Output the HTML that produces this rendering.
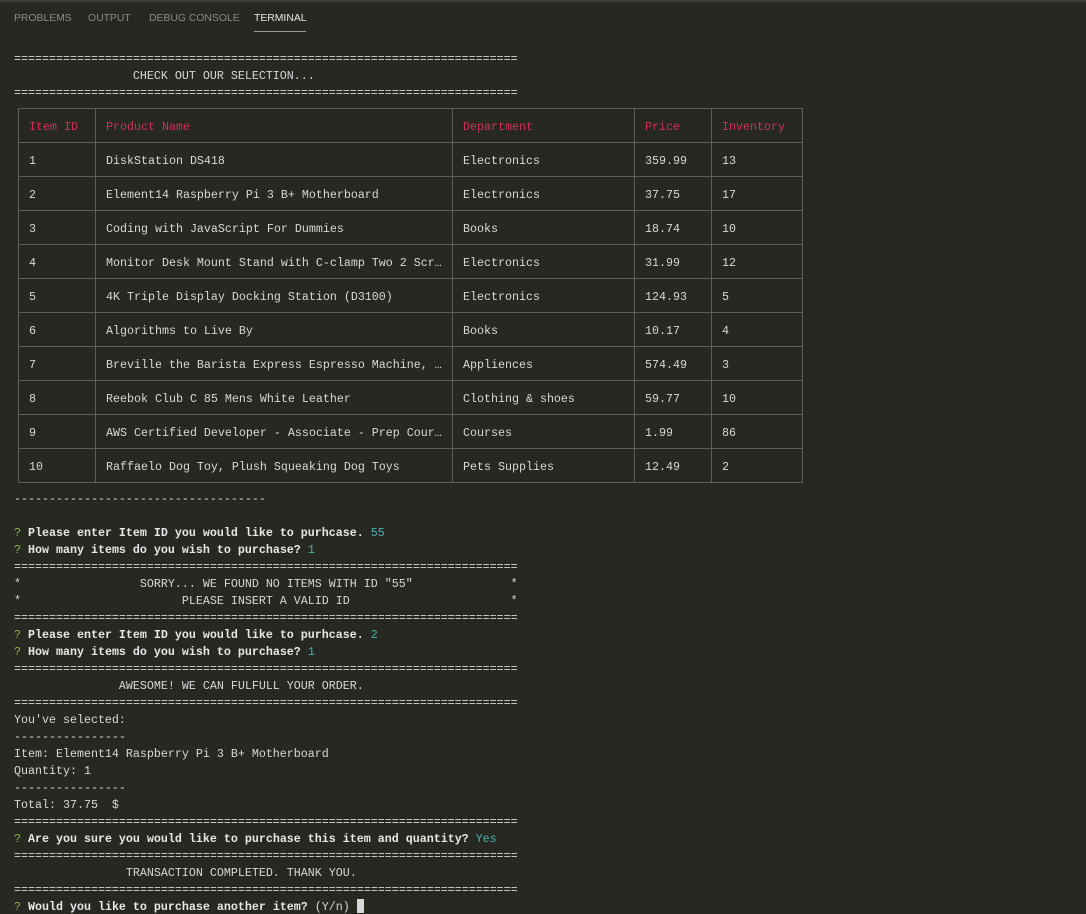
<!DOCTYPE html>
<html><head><meta charset="utf-8"><style>
html,body{margin:0;padding:0;background:#272822;width:1086px;height:914px;overflow:hidden;position:relative}
.top{position:absolute;left:0;top:0;width:1086px;height:2px;background:#3c3c3c}
.tab{position:absolute;top:13px;font:10.4px "Liberation Sans",sans-serif;color:#8a8a8a}
.tab.a{color:#e7e7e7}
.ul{position:absolute;left:254px;top:31px;width:52px;height:1px;background:#9a9a9a}
pre{position:absolute;left:14px;margin:0;font:11.67px/17px "Liberation Mono",monospace;color:#d8d8d8}
b{font-weight:bold;color:#e8e8e8}
.g{color:#8fb83a;font-weight:normal}
.c{color:#46b4b4}
table{position:absolute;left:18px;top:108px;border-collapse:collapse;font:11.67px "Liberation Mono",monospace;color:#d8d8d8}
td{height:34px;padding:2px 0 0 10px;border:1px solid #5d5d5d;white-space:nowrap;overflow:hidden;box-sizing:border-box}
td.b{border-left-color:#4b6080}
tr.h td{color:#d0305a}
.cur{display:inline-block;width:7px;height:14px;background:#d8d8d8;vertical-align:-3px}
</style></head><body>
<div class="top"></div>
<div class="tab" style="left:14px">PROBLEMS</div>
<div class="tab" style="left:88px">OUTPUT</div>
<div class="tab" style="left:149px">DEBUG CONSOLE</div>
<div class="tab a" style="left:254px">TERMINAL</div>
<div class="ul"></div>
<pre style="top:51px">========================================================================
                 CHECK OUT OUR SELECTION...
========================================================================</pre>
<table>
<colgroup><col style="width:77px"><col style="width:357px"><col style="width:182px"><col style="width:77px"><col style="width:91px"></colgroup>
<tr class="h"><td>Item ID</td><td class="b">Product Name</td><td>Department</td><td>Price</td><td class="b">Inventory</td></tr>
<tr><td>1</td><td class="b">DiskStation DS418</td><td>Electronics</td><td>359.99</td><td class="b">13</td></tr>
<tr><td>2</td><td class="b">Element14 Raspberry Pi 3 B+ Motherboard</td><td>Electronics</td><td>37.75</td><td class="b">17</td></tr>
<tr><td>3</td><td class="b">Coding with JavaScript For Dummies</td><td>Books</td><td>18.74</td><td class="b">10</td></tr>
<tr><td>4</td><td class="b">Monitor Desk Mount Stand with C-clamp Two 2 Scr…</td><td>Electronics</td><td>31.99</td><td class="b">12</td></tr>
<tr><td>5</td><td class="b">4K Triple Display Docking Station (D3100)</td><td>Electronics</td><td>124.93</td><td class="b">5</td></tr>
<tr><td>6</td><td class="b">Algorithms to Live By</td><td>Books</td><td>10.17</td><td class="b">4</td></tr>
<tr><td>7</td><td class="b">Breville the Barista Express Espresso Machine, …</td><td>Appliences</td><td>574.49</td><td class="b">3</td></tr>
<tr><td>8</td><td class="b">Reebok Club C 85 Mens White Leather</td><td>Clothing &amp; shoes</td><td>59.77</td><td class="b">10</td></tr>
<tr><td>9</td><td class="b">AWS Certified Developer - Associate - Prep Cour…</td><td>Courses</td><td>1.99</td><td class="b">86</td></tr>
<tr><td>10</td><td class="b">Raffaelo Dog Toy, Plush Squeaking Dog Toys</td><td>Pets Supplies</td><td>12.49</td><td class="b">2</td></tr>
</table>
<pre style="top:491px">------------------------------------

<span class="g">?</span> <b>Please enter Item ID you would like to purhcase.</b> <span class="c">55</span>
<span class="g">?</span> <b>How many items do you wish to purchase?</b> <span class="c">1</span>
========================================================================
*                 SORRY... WE FOUND NO ITEMS WITH ID "55"              *
*                       PLEASE INSERT A VALID ID                       *
========================================================================
<span class="g">?</span> <b>Please enter Item ID you would like to purhcase.</b> <span class="c">2</span>
<span class="g">?</span> <b>How many items do you wish to purchase?</b> <span class="c">1</span>
========================================================================
               AWESOME! WE CAN FULFULL YOUR ORDER.
========================================================================
You've selected:
----------------
Item: Element14 Raspberry Pi 3 B+ Motherboard
Quantity: 1
----------------
Total: 37.75  $
========================================================================
<span class="g">?</span> <b>Are you sure you would like to purchase this item and quantity?</b> <span class="c">Yes</span>
========================================================================
                TRANSACTION COMPLETED. THANK YOU.
========================================================================
<span class="g">?</span> <b>Would you like to purchase another item?</b> (Y/n) <span class="cur"></span></pre>
</body></html>
